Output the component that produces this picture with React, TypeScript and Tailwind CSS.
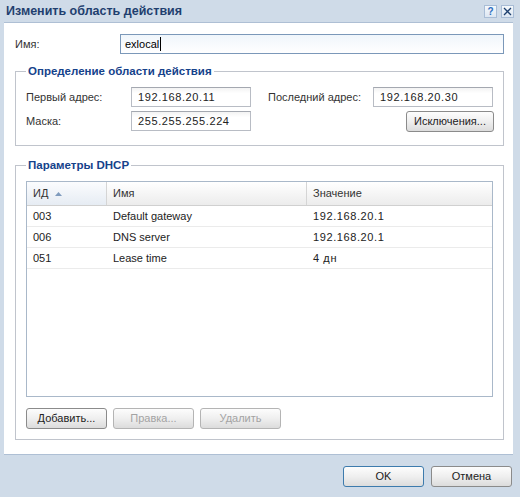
import React from "react";

const font = { fontFamily: '"Liberation Sans", Arial, sans-serif' };

function TextBox({ value, width }: { value: string; width: string }) {
  return (
    <div
      className={`${width} h-[20px] border border-[#b8bcc4] border-t-[#a4a8b0] bg-white bg-gradient-to-b from-[#f3f3f3] to-white to-[30%] px-[6px] flex items-center text-[11px] text-[#222] tracking-[0.6px]`}
    >
      {value}
    </div>
  );
}

function Btn({
  label,
  disabled,
  primary,
  width = "w-[81px]",
}: {
  label: string;
  disabled?: boolean;
  primary?: boolean;
  width?: string;
}) {
  return (
    <button
      className={`${width} h-[21px] rounded-[3px] border text-[11px] flex items-center justify-center bg-gradient-to-b from-[#fdfdfd] via-[#efefef] to-[#dcdcdc] ${
        primary
          ? "border-[#3d7bad] text-[#222]"
          : disabled
          ? "border-[#b4b4b4] text-[#a3a3a3]"
          : "border-[#8b8b8b] text-[#222]"
      }`}
    >
      {label}
    </button>
  );
}

function Legend({ children }: { children: React.ReactNode }) {
  return (
    <legend className="px-[2px] h-[14px] leading-[14px] text-[11.5px] font-bold text-[#15428b]">
      {children}
    </legend>
  );
}

const rows = [
  { id: "003", name: "Default gateway", value: "192.168.20.1" },
  { id: "006", name: "DNS server", value: "192.168.20.1" },
  { id: "051", name: "Lease time", value: "4 дн" },
];

export default function App() {
  return (
    <div
      style={font}
      className="w-[520px] h-[497px] bg-[#cfdbe8] flex flex-col text-[#222] overflow-hidden"
    >
      {/* title bar */}
      <div className="h-[22px] flex items-center justify-between pl-[6px] pr-[6px]">
        <span className="text-[12.5px] font-bold text-[#1f3f6f]">
          Изменить область действия
        </span>
        <div className="flex gap-[4px] pt-[1px]">
          <div className="w-[13px] h-[13px] border border-[#a9bdd6] bg-gradient-to-b from-[#f4f8fc] to-[#dde7f2] flex items-center justify-center text-[10px] font-bold text-[#2d6fbf] leading-none">
            ?
          </div>
          <div className="w-[13px] h-[13px] border border-[#a9bdd6] bg-gradient-to-b from-[#f4f8fc] to-[#dde7f2] flex items-center justify-center">
            <svg width="9" height="9" viewBox="0 0 9 9">
              <path d="M1 1 L8 8 M8 1 L1 8" stroke="#1d3f6e" strokeWidth="1.3" />
            </svg>
          </div>
        </div>
      </div>

      {/* content panel */}
      <div className="ml-[4px] mr-[7px] h-[433px] bg-white border-t border-b border-[#aebfd4] pl-[11px] pt-[11px]">
        <div className="flex items-center">
          <span className="w-[105px] text-[11px] text-[#333]">Имя:</span>
          <div className="w-[384px] h-[20px] border border-[#7b98b9] bg-gradient-to-b from-[#f0f6fb] to-white flex items-center px-[4px] text-[11px] text-black">
            exlocal
            <span className="w-[1px] h-[14px] bg-black ml-[1px]" />
          </div>
        </div>

        <fieldset className="mt-[10px] w-[489px] border border-[#c0c4cc] px-[10px] pt-[9px] pb-[13px]">
          <Legend>Определение области действия</Legend>
          <div className="flex items-center">
            <span className="w-[105px] text-[11px] text-[#333]">Первый адрес:</span>
            <TextBox value="192.168.20.11" width="w-[120px]" />
            <span className="ml-[17px] w-[105px] text-[11px] text-[#333]">
              Последний адрес:
            </span>
            <TextBox value="192.168.20.30" width="w-[120px]" />
          </div>
          <div className="flex items-start mt-[4px]">
            <div className="flex items-center">
              <span className="w-[105px] text-[11px] text-[#333]">Маска:</span>
              <TextBox value="255.255.255.224" width="w-[120px]" />
            </div>
            <div className="ml-auto mr-[-1px]">
              <Btn label="Исключения..." width="w-[88px]" />
            </div>
          </div>
        </fieldset>

        <fieldset className="mt-[12px] w-[489px] border border-[#c0c4cc] px-[10px] pt-[9px] pb-[10px]">
          <Legend>Параметры DHCP</Legend>
          <div className="h-[216px] border border-[#a9b8c9] flex flex-col">
            <div className="h-[24px] flex text-[11px] text-[#333] border-b border-[#d0d0d0] bg-gradient-to-b from-white to-[#ececec]">
              <div className="w-[80px] flex items-center pl-[6px] gap-[7px] border-r border-[#d5d5d5] bg-gradient-to-b from-[#fbfcfe] to-[#e6ecf3]">
                ИД
                <svg width="7" height="4" viewBox="0 0 7 4">
                  <path d="M0 4 L3.5 0 L7 4 Z" fill="#7f9bbd" />
                </svg>
              </div>
              <div className="w-[200px] flex items-center pl-[6px] border-r border-[#d5d5d5]">
                Имя
              </div>
              <div className="flex-1 flex items-center pl-[6px]">Значение</div>
            </div>
            {rows.map((r) => (
              <div
                key={r.id}
                className="h-[21px] flex items-center text-[11px] text-[#222] border-b border-[#ebebeb]"
              >
                <div className="w-[80px] pl-[6px]">{r.id}</div>
                <div className="w-[200px] pl-[6px]">{r.name}</div>
                <div className="flex-1 pl-[6px] tracking-[0.6px]">{r.value}</div>
              </div>
            ))}
          </div>
          <div className="flex gap-[6px] mt-[11px]">
            <Btn label="Добавить..." />
            <Btn label="Правка..." disabled />
            <Btn label="Удалить" disabled />
          </div>
        </fieldset>
      </div>

      {/* footer */}
      <div className="flex justify-end gap-[7px] pr-[8px] pt-[11px]">
        <Btn label="OK" primary />
        <Btn label="Отмена" />
      </div>
    </div>
  );
}
